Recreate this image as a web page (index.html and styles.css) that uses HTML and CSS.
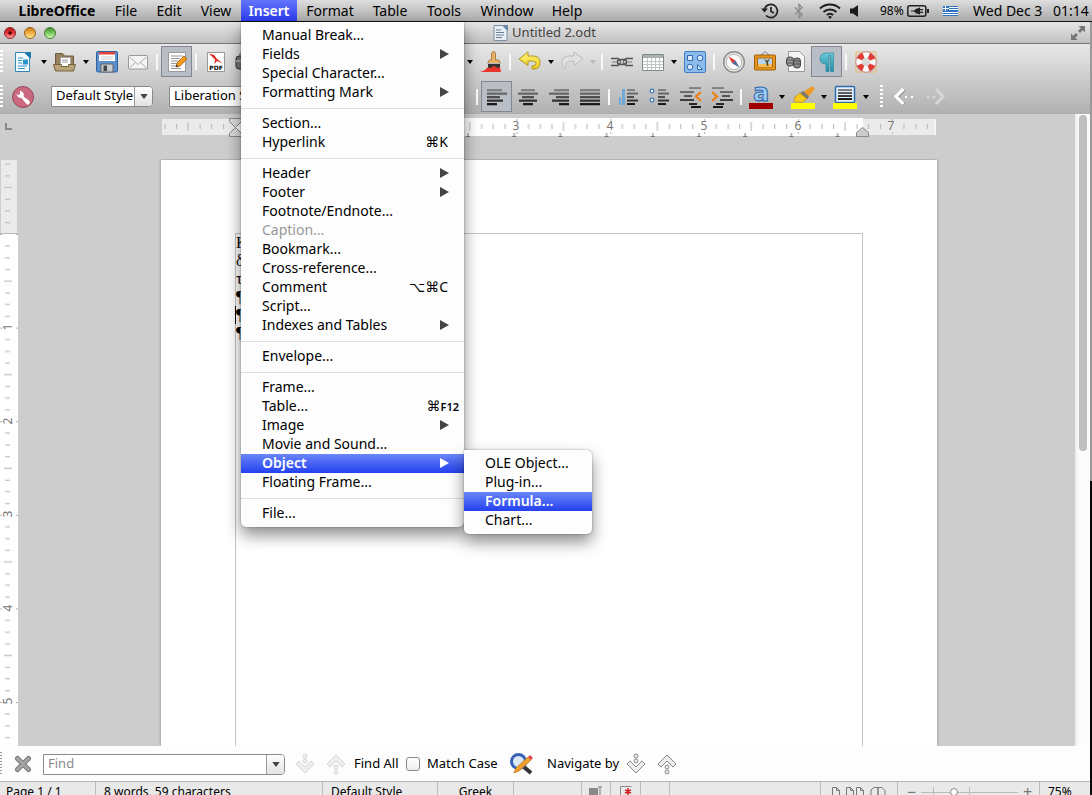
FILE: index.html
```html
<!DOCTYPE html>
<html lang="en">
<head>
<meta charset="utf-8">
<title>Untitled 2.odt</title>
<link rel="stylesheet" href="styles.css">
</head>
<body>
<svg class="defs" width="0" height="0" aria-hidden="true">
  <defs>
    <linearGradient id="gRed" x2="0" y2="1"><stop offset="0" stop-color="#a81818"/><stop offset=".5" stop-color="#e8383c"/><stop offset="1" stop-color="#ffb0b0"/></linearGradient>
    <linearGradient id="gAmber" x2="0" y2="1"><stop offset="0" stop-color="#c87818"/><stop offset=".5" stop-color="#f4b040"/><stop offset="1" stop-color="#fff0a0"/></linearGradient>
    <linearGradient id="gGreen" x2="0" y2="1"><stop offset="0" stop-color="#3c8c2c"/><stop offset=".5" stop-color="#7cc860"/><stop offset="1" stop-color="#d8ffb8"/></linearGradient>
    <linearGradient id="gGold" x2="0" y2="1"><stop offset="0" stop-color="#fff67a"/><stop offset="1" stop-color="#ecc818"/></linearGradient>
    <linearGradient id="gTeal" x2="0" y2="1"><stop offset="0" stop-color="#6cc8d8"/><stop offset="1" stop-color="#1b8fa8"/></linearGradient>
    <linearGradient id="gBar" x2="0" y2="1"><stop offset="0" stop-color="#888"/><stop offset="1" stop-color="#111"/></linearGradient>
    <symbol id="caret" viewBox="0 0 6 4"><path d="M0 0h6L3 4z"/></symbol>
    <symbol id="arrow" viewBox="0 0 9 10"><path d="M0 0l9 5-9 5z" fill="currentColor"/></symbol>
    <symbol id="down2" viewBox="0 0 20 22"><g fill="#eee" stroke="currentColor"><circle cx="10" cy="3" r="2"/><circle cx="10" cy="8" r="2"/><path d="M1 11l3-3 6 6 6-6 3 3-9 9z"/></g></symbol>
    <symbol id="up2" viewBox="0 0 20 22"><g fill="#eee" stroke="currentColor"><path d="M1 11l9-9 9 9-3 3-6-6-6 6z"/><circle cx="10" cy="14" r="2"/><circle cx="10" cy="19" r="2"/></g></symbol>
  </defs>
</svg>

<nav class="menubar">
  <div class="menus">
    <button class="menu-title app">LibreOffice</button>
    <button class="menu-title">File</button>
    <button class="menu-title">Edit</button>
    <button class="menu-title">View</button>
    <div class="menu-holder">
      <button class="menu-title open">Insert</button>
      <div class="menu" role="menu">
        <button class="item">Manual Break...</button>
        <button class="item">Fields<svg class="more"><use href="#arrow"/></svg></button>
        <button class="item">Special Character...</button>
        <button class="item">Formatting Mark<svg class="more"><use href="#arrow"/></svg></button>
        <hr>
        <button class="item">Section...</button>
        <button class="item">Hyperlink<span class="keys"><i>⌘</i>K</span></button>
        <hr>
        <button class="item">Header<svg class="more"><use href="#arrow"/></svg></button>
        <button class="item">Footer<svg class="more"><use href="#arrow"/></svg></button>
        <button class="item">Footnote/Endnote...</button>
        <button class="item" disabled>Caption...</button>
        <button class="item">Bookmark...</button>
        <button class="item">Cross-reference...</button>
        <button class="item">Comment<span class="keys"><i>⌥⌘</i>C</span></button>
        <button class="item">Script...</button>
        <button class="item">Indexes and Tables<svg class="more"><use href="#arrow"/></svg></button>
        <hr>
        <button class="item">Envelope...</button>
        <hr>
        <button class="item">Frame...</button>
        <button class="item">Table...<span class="keys fn"><i>⌘</i><small>F12</small></span></button>
        <button class="item">Image<svg class="more"><use href="#arrow"/></svg></button>
        <button class="item">Movie and Sound...</button>
        <div class="item-holder">
          <button class="item active">Object<svg class="more"><use href="#arrow"/></svg></button>
          <div class="menu submenu" role="menu">
            <button class="item">OLE Object...</button>
            <button class="item">Plug-in...</button>
            <button class="item active">Formula...</button>
            <button class="item">Chart...</button>
          </div>
        </div>
        <button class="item">Floating Frame...</button>
        <hr>
        <button class="item">File...</button>
      </div>
    </div>
    <button class="menu-title">Format</button>
    <button class="menu-title">Table</button>
    <button class="menu-title">Tools</button>
    <button class="menu-title">Window</button>
    <button class="menu-title">Help</button>
  </div>
  <div class="extras">
    <svg width="18" height="16" viewBox="0 0 18 16" fill="none" stroke="#222" stroke-width="1.7"><path d="M3.5 6A6.6 6.6 0 1 1 5 12.500"/><path d="M10 4v4.500l3 1.500"/><path d="M0 5.500h7L3.500 9.500z" fill="#222" stroke="none"/></svg>
    <svg class="bt" width="10" height="16" viewBox="0 0 10 16" fill="none" stroke="#8a8a8a" stroke-width="1.300"><path d="M1 4.500l7 7L5 14.500v-13l3 3-7 7"/></svg>
    <svg class="wifi" width="22" height="16" viewBox="0 0 22 16" fill="none" stroke="#1c1c1c" stroke-width="2"><path d="M1 5.500a14.500 14.500 0 0 1 20 0M4.500 9a9.500 9.500 0 0 1 13 0M7.800 12a5 5 0 0 1 6.400 0"/><path d="M11 16l-2-2.200a3 3 0 0 1 4 0z" fill="#1c1c1c" stroke="none"/></svg>
    <svg class="vol" width="8" height="12" viewBox="0 0 8 12"><path d="M0 3.500h3L8 0v12L3 8.500H0z" fill="#1c1c1c"/></svg>
    <span class="percent">98%</span>
    <svg class="batt" width="22" height="12" viewBox="0 0 22 12"><rect x=".8" y=".8" width="18" height="10.400" rx="2" fill="none" stroke="#222" stroke-width="1.500"/><path d="M20 4h2v4h-2zM4 5.500h3Q9 3 12 3V2.500h1V4h3v1.200h-3v1.600h3V8h-3v1.500h-1V9Q9 9 7 6.500H4z" fill="#222"/></svg>
    <svg class="flag" width="15" height="10" viewBox="0 0 15 10" shape-rendering="crispEdges"><path fill="#2f74c4" d="M0 0h15v10H0z"/><path fill="#fff" d="M6 1h9v1H6zM6 3h9v1H6zM0 6h15v1H0zM0 8h15v1H0zM2 0h1v5H2zM0 2h6v1H0z"/></svg>
    <span class="date">Wed Dec 3</span>
    <span class="time">01:14</span>
  </div>
</nav>

<div class="desktop">
<main class="window">
  <header class="titlebar">
    <div class="lights">
      <svg width="12" height="12"><circle cx="6" cy="6" r="5.500" fill="url(#gRed)" stroke="#8c2a2a"/><circle cx="6" cy="6" r="1.800" fill="#500"/></svg>
      <svg width="12" height="12"><circle cx="6" cy="6" r="5.500" fill="url(#gAmber)" stroke="#966020"/></svg>
      <svg width="12" height="12"><circle cx="6" cy="6" r="5.500" fill="url(#gGreen)" stroke="#4a8038"/></svg>
    </div>
    <h1 class="title"><svg width="15" height="16" viewBox="0 0 15 16"><path d="M1 .5h8.500L14 5v10.500H1z" fill="#e6eef4" stroke="#7890a8"/><path d="M9.500 0H15v6z" fill="#6a88a8"/><path d="M3 5h5M3 7.500h8M3 10h8M3 12.500h6" stroke="#6d8094"/></svg>Untitled 2.odt</h1>
    <svg class="full" width="14" height="14" viewBox="0 0 14 14" fill="#777"><path d="M7.500 0H14v6.500L11.800 4.300 9 7 7 5l2.700-2.700zM0 7.500V14h6.500l-2.200-2.200L7 9 5 7 2.200 9.700z"/></svg>
  </header>

  <section class="toolbars">
    <div class="toolbar">
      <span class="grip"></span>
      <button class="tool" aria-label="New"><svg viewBox="0 0 24 24"><path d="M4.500 2.500h9l5 5v14h-14z" fill="#f4fbff" stroke="#3586b8"/><path d="M13 2h7v7z" fill="#1f78b0"/><path d="M7 8h5M7 10.500h4M7 13h4M7 16h9M7 18.500h7" stroke="#2f93c8"/><path d="M12 9.500h5v5h-5z" fill="#2c93cc"/></svg></button>
      <button class="drop" aria-label="New options"><svg><use href="#caret"/></svg></button>
      <button class="tool" aria-label="Open"><svg viewBox="0 0 24 24"><path d="M2.500 19V3.500h7l2 2.500h9v13z" fill="#98825e" stroke="#6e5c40"/><path d="M7.500 7.500h10v9h-10z" fill="#fff" stroke="#aaa"/><path d="M9 10h6M9 12h6" stroke="#999"/><path d="M.500 14.500h8v2h7v-2h7l-2 6.500h-18z" fill="#b8a278" stroke="#75623f"/></svg></button>
      <button class="drop" aria-label="Open options"><svg><use href="#caret"/></svg></button>
      <button class="tool" aria-label="Save"><svg viewBox="0 0 24 24"><rect x="1.500" y="1.500" width="21" height="20.500" rx="1.500" fill="#5b8fcf" stroke="#315f9c"/><path d="M4 2h16v9H4z" fill="#fff"/><path d="M4 2h16v2.500H4z" fill="#e2453b"/><path d="M6 7h12M6 9h12" stroke="#ccc"/><path d="M6 14h12v8H6z" fill="#c8ccd0" stroke="#666"/><path d="M8.500 15.500h3.500V21H8.500z" fill="#444"/></svg></button>
      <button class="tool" aria-label="E-mail"><svg viewBox="0 0 24 24"><rect x="2.500" y="5.500" width="19" height="13.500" rx="1" fill="#f5f5f5" stroke="#999"/><path d="M3.500 7l8.500 7.500L20.500 7M3.500 18l6-5.500M20.500 18l-6-5.500" fill="none" stroke="#aaa"/></svg></button>
      <span class="sep"></span>
      <button class="tool pressed" aria-label="Edit File"><svg viewBox="0 0 24 24"><path d="M3.500 2.500h17v19h-17z" fill="#fbfbfb" stroke="#999"/><path d="M6 6h12M6 8.500h9M6 11h7M6 13.500h6M6 16h5M6 18.500h10" stroke="#999"/><path d="M11 17l1-4 7-7 3 3-7 7z" fill="#f49b1c" stroke="#a8620c" stroke-width=".8"/><path d="M11 17l.6-2.400L13.300 16.300z" fill="#222"/></svg></button>
      <span class="sep"></span>
      <button class="tool" aria-label="Export as PDF"><svg viewBox="0 0 24 24"><path d="M3.500 2.500h17v19h-17z" fill="#fff" stroke="#999"/><path d="M5 3.500l5 1.500 3 4 6 4.500-6-2.500-2.500 3 .500-4.500z" fill="#e2231a"/><text x="12" y="20" text-anchor="middle" class="pdf">PDF</text></svg></button>
      <button class="tool" aria-label="Print"><svg viewBox="0 0 24 24"><path d="M5 3h15v8H5z" fill="#f4f4f4" stroke="#777"/><rect x="1" y="6" width="22" height="13" rx="3" fill="#777" stroke="#333"/><path d="M1 11h22" stroke="#ddd"/></svg></button>
      <span class="covered"></span>
      <button class="drop" aria-label="Paste options"><svg><use href="#caret"/></svg></button>
      <button class="tool" aria-label="Clone Formatting"><svg viewBox="0 0 24 24"><path d="M12.500 10V4q0-2.500 2-2.500t2 2.500v6h3q1.500 0 1.500 4H9q0-4 1.500-4z" fill="#ecb268" stroke="#9a6a2c" stroke-width=".8"/><path d="M9 14h12v4H9z" fill="#333"/><path d="M9 13.500h12" stroke="#bbb"/><path d="M9 17q2 2 4 0t4 0 4 0l1 5H1q5-1 8-5z" fill="#e8342a"/></svg></button>
      <span class="sep"></span>
      <button class="tool" aria-label="Undo"><svg viewBox="0 0 24 24"><path d="M1 9l9-7v4h5q7 0 7 6.500T16 19h-2v-3q4 0 4-2.500t-4-2.500h-4v4.500z" fill="url(#gGold)" stroke="#b39420"/></svg></button>
      <button class="drop" aria-label="Undo options"><svg><use href="#caret"/></svg></button>
      <button class="tool" aria-label="Redo" disabled><svg viewBox="0 0 24 24"><path d="M23 9l-9-7v4H9q-7 0-7 6.500 0 4 3 6.500.500-8 5-8h4v4.500z" fill="#e0e0e0" stroke="#bcbcbc"/></svg></button>
      <button class="drop faded" aria-label="Redo options" disabled><svg><use href="#caret"/></svg></button>
      <span class="sep"></span>
      <button class="tool" aria-label="Hyperlink"><svg viewBox="0 0 24 24" fill="none" stroke="#555" stroke-width="1.500"><path d="M1 8.500h7l3 3M1 15.500h7l3-3M23 8.500h-7l-3 3M23 15.500h-7l-3-3"/><path d="M2 12h6M16 12h6" stroke="#999"/><rect x="7.500" y="9.500" width="9" height="5" rx="2.500"/></svg></button>
      <button class="tool" aria-label="Table"><svg viewBox="0 0 24 24"><path d="M1.500 4.500h21v16h-21z" fill="#fff" stroke="#808a84"/><path d="M2 5h20v3H2z" fill="#a9b3ac"/><path d="M2 11.500h20M2 14.500h20M2 17.500h20M6.500 8v12M10.500 8v12M14.500 8v12M18.500 8v12" stroke="#c0c6c2"/></svg></button>
      <button class="drop" aria-label="Table options"><svg><use href="#caret"/></svg></button>
      <button class="tool" aria-label="Gallery"><svg viewBox="0 0 24 24"><rect x="1.500" y="1.500" width="21" height="21" rx="1.500" fill="#8dbcec" stroke="#3d7fc4"/><g fill="#d8eafc" stroke="#2f6cb0"><path d="M4.500 5.500h5v5h-5zM14.500 14.500v5h5z"/><circle cx="17" cy="8" r="2.800"/><circle cx="7" cy="17" r="2.800"/></g></svg></button>
      <span class="sep"></span>
      <button class="tool" aria-label="Navigator"><svg viewBox="0 0 24 24"><circle cx="12" cy="12" r="10.300" fill="#ececec" stroke="#8e8e8e" stroke-width="1.500"/><circle cx="12" cy="12" r="7.800" fill="#fafafa" stroke="#b0b0b0"/><path d="M6.500 6.500L13.500 10.500 10.500 13.500z" fill="#d83830"/><path d="M17.500 17.500L13.500 10.500 10.500 13.500z" fill="#4a6898"/></svg></button>
      <button class="tool" aria-label="Image"><svg viewBox="0 0 24 24"><path d="M8 5l4-3.500L16 5" fill="none" stroke="#7d8794"/><rect x="1.500" y="5" width="21" height="15" rx="1" fill="#e8971c" stroke="#9c5e0c"/><path d="M4.500 8h15v9h-15z" fill="#b8d4ec" stroke="#a66a14"/><path d="M5 14h14v3H5z" fill="#f6bd58"/><path d="M14 16l-1-4-2-3 3 1.500 3-2-2 4 .500 3.500z" fill="#5a5030"/></svg></button>
      <button class="tool" aria-label="Find and Replace"><svg viewBox="0 0 24 24"><path d="M4.500 1.500h11l5 5v15h-16z" fill="#f6f6f6" stroke="#999"/><rect x="2.500" y="7" width="7" height="9" rx="3" fill="#999" stroke="#444"/><rect x="9.500" y="8" width="7" height="10" rx="3" fill="#888" stroke="#444"/><path d="M3 10h6M3 13h6M10 11h6M10 14h6" stroke="#555"/></svg></button>
      <button class="tool pressed" aria-label="Formatting Marks"><svg viewBox="0 0 24 24"><path d="M5 9q0-6 7-6h6.500v18.500h-3V5.500h-1.500v16h-3V14Q5 14 5 9z" fill="url(#gTeal)" stroke="#2c8aa0" stroke-width=".7"/></svg></button>
      <span class="sep"></span>
      <button class="tool" aria-label="Help"><svg viewBox="0 0 24 24"><path d="M2 2h20v20H2z" fill="none" stroke="#e8b870"/><circle cx="12" cy="12" r="7.200" fill="none" stroke="#fafafa" stroke-width="6"/><circle cx="12" cy="12" r="7.200" fill="none" stroke="#e03c34" stroke-width="6" stroke-dasharray="5.650 5.660" stroke-dashoffset="-2.800"/><circle cx="12" cy="12" r="10.300" fill="none" stroke="#c88"/></svg></button>
    </div>

    <div class="toolbar">
      <span class="grip"></span>
      <button class="tool" aria-label="Styles"><svg viewBox="0 0 24 24"><circle cx="12" cy="12" r="10.500" fill="#c9687e" stroke="#94485a"/><path d="M5.500 8.500q.500 4.500 5 4.500l5 6q2 1.500 3-.500t-.500-3l-5.500-4q1.500-4-3.500-6v4L7 10z" fill="#fff"/></svg></button>
      <span class="combo style"><select aria-label="Paragraph style"><option>Default Style</option></select><span class="combo-arrow"><svg width="8" height="5" viewBox="0 0 6 4"><use href="#caret"/></svg></span></span>
      <span class="combo font"><select aria-label="Font name"><option>Liberation Serif</option></select></span>
      <span class="sep"></span>
      <button class="tool pressed" aria-label="Align Left"><svg viewBox="0 0 24 24" fill="url(#gBar)"><path d="M2 4h15v2.200H2zM2 7.500h20v2.200H2zM2 11h13v2.200H2zM2 14.500h16v2.200H2zM2 18h10v2.200H2z"/></svg></button>
      <button class="tool" aria-label="Center"><svg viewBox="0 0 24 24" fill="url(#gBar)"><path d="M5 4h14v2.200H5zM2 7.500h20v2.200H2zM6 11h12v2.200H6zM3 14.500h18v2.200H3zM7 18h10v2.200H7z"/></svg></button>
      <button class="tool" aria-label="Align Right"><svg viewBox="0 0 24 24" fill="url(#gBar)"><path d="M7 4h15v2.200H7zM2 7.500h20v2.200H2zM9 11h13v2.200H9zM5 14.500h17v2.200H5zM12 18h10v2.200H12z"/></svg></button>
      <button class="tool" aria-label="Justify"><svg viewBox="0 0 24 24" fill="url(#gBar)"><path d="M2 4h20v2.200H2zM2 7.500h20v2.200H2zM2 11h20v2.200H2zM2 14.500h20v2.200H2zM2 18h20v2.200H2z"/></svg></button>
      <span class="sep"></span>
      <button class="tool" aria-label="Numbering"><svg viewBox="0 0 24 24"><path d="M5 4h3v16H5zM2 12h2v8H2z" fill="#6fa8d8"/><path d="M10 4h8v2h-8zM10 7.500h11v2H10zM10 11h7v2h-7zM10 14.500h11v2H10zM10 18h8v2h-8z" fill="url(#gBar)"/></svg></button>
      <button class="tool" aria-label="Bullets"><svg viewBox="0 0 24 24"><g fill="#fff" stroke="#3a78b8" stroke-width="1.200"><circle cx="4" cy="6" r="1.800"/><circle cx="4" cy="15" r="1.800"/></g><path d="M10 4h8v2h-8zM10 7.500h11v2H10zM10 11h7v2h-7zM10 14.500h11v2H10zM10 18h8v2h-8z" fill="url(#gBar)"/></svg></button>
      <button class="tool" aria-label="Decrease Indent"><svg viewBox="0 0 24 24"><path d="M10 2h12v2H10zM1 6h14v2H1zM5 10h8v2H5zM1 14h14v2H1zM10 18h8v2h-8zM12 21h10v2H12z" fill="url(#gBar)"/><path d="M22 7l-5 4.500 5 4.500" fill="none" stroke="#ef7d14" stroke-width="2.200"/></svg></button>
      <button class="tool" aria-label="Increase Indent"><svg viewBox="0 0 24 24"><path d="M2 2h12v2H2zM10 6h13v2H10zM12 10h8v2h-8zM10 14h13v2H10zM6 18h8v2H6zM3 21h10v2H3z" fill="url(#gBar)"/><path d="M2 7l5 4.500L2 16" fill="none" stroke="#ef7d14" stroke-width="2.200"/></svg></button>
      <span class="sep"></span>
      <button class="tool" aria-label="Font Color"><svg viewBox="0 0 24 24"><text x="12" y="16" text-anchor="middle" class="glyph-a">a</text><path d="M0 18h24v6H0z" fill="#a00000"/></svg></button>
      <button class="drop" aria-label="Font color options"><svg><use href="#caret"/></svg></button>
      <button class="tool" aria-label="Highlighting"><svg viewBox="0 0 24 24"><path d="M12 7l9-5.500q3 0 2.500 3L17 12z" fill="#ee9c26"/><path d="M9 8l3-2 6 5.500-2 3z" fill="#777"/><path d="M3 17l1-5 5-4 7 6-5 3.500z" fill="#f5c81c" stroke="#c49210" stroke-width=".7"/><path d="M0 18h24v6H0z" fill="#ff0"/></svg></button>
      <button class="drop" aria-label="Highlighting options"><svg><use href="#caret"/></svg></button>
      <button class="tool" aria-label="Paragraph Background"><svg viewBox="0 0 24 24"><rect x="2.500" y="1.500" width="19" height="16" rx="1" fill="#e4f0fb" stroke="#2f6cae" stroke-width="1.500"/><path d="M5 4h14v2H5zM5 7h14v2H5zM5 10h14v2H5zM5 13h14v2H5z" fill="url(#gBar)"/><path d="M0 18h24v6H0z" fill="#ff0"/></svg></button>
      <button class="drop" aria-label="Background options"><svg><use href="#caret"/></svg></button>
      <span class="grip second"></span>
      <button class="tool" aria-label="Previous"><svg viewBox="0 0 24 24"><path d="M12 4.500L5 12l7 7.500" fill="none" stroke="#888" stroke-width="4"/><path d="M11.500 4L4 11.500l7.500 7.500" fill="none" stroke="#fff" stroke-width="3.200"/><g fill="#fff" stroke="#999" stroke-width=".5"><circle cx="14" cy="12" r="1.800"/><circle cx="20" cy="12" r="1.800"/></g></svg></button>
      <button class="tool" aria-label="Next" disabled><svg viewBox="0 0 24 24"><path d="M13 4l7 7.500-7 7.500" fill="none" stroke="#d6d6d6" stroke-width="3"/><g fill="#d6d6d6"><circle cx="11" cy="12" r="1.600"/><circle cx="5" cy="12" r="1.600"/></g></svg></button>
    </div>
  </section>

  <section class="workspace">
    <div class="corner"><svg width="7" height="7"><path d="M0 0h2v5h5v2H0z" fill="#888"/></svg></div>
    <div class="h-ruler">
      <svg width="774" height="20">
        <defs>
          <pattern id="ticks" x="73" y="0" width="93.840" height="20" patternUnits="userSpaceOnUse"><path d="M12 6v5M24 6v5M35.500 6v5M59 6v5M70.500 6v5M82.500 6v5M47 4v9M.500 1v2M.500 14v2" stroke="#b4b4b4"/></pattern>
          <pattern id="tabs" x="73" y="15" width="46.200" height="4" patternUnits="userSpaceOnUse"><path d="M0 3.500h4M2 0v3" stroke="#777"/></pattern>
        </defs>
        <path d="M0 1h774v16H0z" fill="#ebebeb"/><path d="M73 0h628v18H73z" fill="#fff"/>
        <path d="M0 1h774v16H0z" fill="url(#ticks)"/><path d="M73 15h628v4H73z" fill="url(#tabs)"/>
        <path d="M773 1v16" stroke="#fff"/>
        <g class="ruler-num" text-anchor="middle"><text x="354" y="12">3</text><text x="448" y="12">4</text><text x="542" y="12">5</text><text x="636" y="12">6</text><text x="729" y="12">7</text></g>
        <path d="M67.500 .500h12v3l-6 6 6 6v3h-12v-3l6-6-6-6z" fill="#ddd" stroke="#888"/>
        <path d="M694.500 18.500v-4l6-5 6 5v4z" fill="#ccc" stroke="#888"/>
      </svg>
    </div>
    <div class="v-ruler">
      <svg width="18" height="586">
        <defs><pattern id="vticks" x="0" y="74" width="18" height="93.600" patternUnits="userSpaceOnUse"><path d="M5 12h5M5 24h5M5 35.500h5M5 59h5M5 70.500h5M5 82.500h5M4 47h8M0 .500h2M16 .500h2" stroke="#b4b4b4"/></pattern></defs>
        <path d="M1 0h16v73H1z" fill="#ebebeb"/><path d="M0 74h18v512H0z" fill="#fff"/><path d="M0 73.500h18" stroke="#bbb"/>
        <path d="M0 0h18v586H0z" fill="url(#vticks)"/>
        <g class="ruler-num" text-anchor="middle"><text transform="translate(12 167) rotate(-90)">1</text><text transform="translate(12 261) rotate(-90)">2</text><text transform="translate(12 354) rotate(-90)">3</text><text transform="translate(12 448) rotate(-90)">4</text><text transform="translate(12 541) rotate(-90)">5</text></g>
      </svg>
    </div>
    <div class="canvas">
      <article class="page">
        <div class="text-frame" lang="el">
          <p>Κ</p><p>δ</p><p>τ</p><p>¶</p><p class="cursor">¶</p><p>¶</p>
        </div>
      </article>
    </div>
    <div class="scrollbar"><div class="thumb"></div></div>
  </section>

  <form class="findbar">
    <span class="grip"></span>
    <button type="button" class="plain close" aria-label="Close"><svg width="18" height="18" viewBox="0 0 18 18"><path d="M3.500 3.500l11 11M14.500 3.500l-11 11" stroke="#777" stroke-width="5" stroke-linecap="round"/><path d="M3.500 3.500l11 11M14.500 3.500l-11 11" stroke="#a4a4a4" stroke-width="3" stroke-linecap="round"/></svg></button>
    <span class="combo find"><input type="text" placeholder="Find" aria-label="Find"><span class="combo-arrow"><svg width="8" height="5" viewBox="0 0 6 4"><use href="#caret"/></svg></span></span>
    <button type="button" class="plain nav dim" aria-label="Find Next"><svg width="20" height="22"><use href="#down2"/></svg></button>
    <button type="button" class="plain nav dim" aria-label="Find Previous"><svg width="20" height="22"><use href="#up2"/></svg></button>
    <button type="button" class="plain all">Find All</button>
    <label class="match"><input type="checkbox">Match Case</label>
    <button type="button" class="plain replace" aria-label="Find and Replace"><svg width="24" height="22" viewBox="0 0 24 22"><path d="M15 14l7 6" stroke="#333" stroke-width="4"/><circle cx="9.500" cy="8.500" r="7" fill="#dce9f8" stroke="#3a62b4" stroke-width="3"/><path d="M5 20l2-5L19 4l3 3L10 18z" fill="#f5a02a" stroke="#b06a14" stroke-width=".7"/><path d="M19 4l2-2 3 3-2 2z" fill="#e04848"/></svg></button>
    <span class="nav-label">Navigate by</span>
    <button type="button" class="plain nav lit" aria-label="Next"><svg width="20" height="22"><use href="#down2"/></svg></button>
    <button type="button" class="plain nav lit" aria-label="Previous"><svg width="20" height="22"><use href="#up2"/></svg></button>
  </form>

  <footer class="statusbar">
    <span>Page 1 / 1</span>
    <span>8 words, 59 characters</span>
    <span>Default Style</span>
    <span class="mid">Greek</span>
    <span></span>
    <span class="mid"><svg width="14" height="12"><path d="M0 2h9v8H0z" fill="#888"/><path d="M9 1h4M11 1v10" stroke="#777"/></svg></span>
    <span class="mid"><svg width="14" height="14"><path d="M1.500 14V1.500h11" fill="none" stroke="#888"/><path d="M9 3v7M6 4.800l6 3.400M12 4.800L6 8.200" stroke="#d01818" stroke-width="1.500"/></svg></span>
    <span></span>
    <span></span>
    <span class="mid"><svg width="56" height="14" fill="none" stroke="#777"><path d="M1.500 14V2.500h4l3 3V14M5.500 2.500v3h3M15.500 14V2.500h4l3 3V14M19.500 2.500v3h3M25.500 14V2.500h4l3 3V14M29.500 2.500v3h3M40 14V5l3-2.500h4V14M47 14V2.500h4l3 3V14"/></svg></span>
    <span class="zoom"><button type="button" aria-label="Zoom out">−</button><input type="range" min="0" max="100" value="33" aria-label="Zoom"><button type="button" aria-label="Zoom in">+</button></span>
    <span>75%</span>
  </footer>
</main>
<div class="behind"></div>
</div>
</body>
</html>
```

FILE: styles.css
```css
* { box-sizing: border-box; }
body {
  margin: 0;
  height: 100vh;
  overflow: hidden;
  display: flex;
  flex-direction: column;
  font: 14px/19px "Noto Sans", "Open Sans", sans-serif;
  color: #000;
}
button, input, select { font: inherit; color: inherit; margin: 0; padding: 0; border: 0; background: none; }
svg { display: block; flex: none; }
.defs { position: absolute; }

/* Menu bar */
.menubar {
  display: flex;
  justify-content: space-between;
  height: 22px;
  flex: none;
  border-bottom: 1px solid #111;
  background: linear-gradient(#dedede, #a9a9a9);
  position: relative;
  z-index: 2;
}
.menus { display: grid; grid-template-columns: 96px 42px 44px 50px 56px 66px 54px 54px 72px 48px; padding-left: 9px; }
.menu-title { height: 21px; line-height: 21px; text-align: center; white-space: nowrap; }
.menu-title.app { font-weight: 700; }
.menu-title.open { width: 100%; font-weight: 600; color: #fff; background: linear-gradient(#6474fa, #2a3cf0); }
.menu-holder, .item-holder { position: relative; }
.menu {
  position: absolute;
  top: 22px;
  left: 0;
  width: 223px;
  padding: 4px 0;
  background: #fdfdfd;
  border-radius: 0 0 5px 5px;
  box-shadow: 0 8px 16px rgba(0,0,0,.45), 0 0 2px rgba(0,0,0,.4);
}
.submenu { top: -4px; left: 100%; width: 128px; border-radius: 0 5px 5px 5px; }
.item {
  display: flex;
  align-items: center;
  width: 100%;
  height: 19px;
  padding: 0 16px 2px 21px;
  white-space: nowrap;
}
.item.active { color: #fff; font-weight: 600; background: linear-gradient(#6a86f8, #2440f0); }
.item:disabled { color: #999; }
.menu hr { height: 1px; margin: 6px 0 5px; border: 0; background: #ddd; }
.more { width: 9px; height: 10px; margin-left: auto; margin-right: -1px; color: #444; }
.active .more { color: #fff; }
.keys { margin-left: auto; }
.keys i { font: 14px "DejaVu Sans", sans-serif; }
.keys.fn { margin-right: -11px; }
.keys small { font-size: 11px; font-weight: 600; }

.extras { display: flex; align-items: center; width: 331px; white-space: nowrap; flex: none; }
.bt { margin-left: 15px; }
.wifi { margin-left: 15px; }
.vol { margin-left: 9px; }
.percent { width: 27px; margin-left: 22px; font-size: 12px; }
.flag { margin-left: 14px; }
.date { margin-left: 15px; width: 80px; }

/* Window */
.desktop { flex: 1; min-height: 0; display: flex; }
.window { flex: 1; min-width: 0; display: flex; flex-direction: column; background: #fff; }
.behind { width: 2px; background: linear-gradient(#9a9a9a 0 459px, #0a0a0a 459px); }
.titlebar {
  display: grid;
  grid-template-columns: 1fr auto 1fr;
  align-items: center;
  height: 22px;
  flex: none;
  padding: 0 5px 0 4px;
  border-bottom: 1px solid #777;
  background: linear-gradient(#e6e6e6, #c0c0c0);
}
.lights { display: flex; gap: 8px; }
.full { justify-self: end; }
.title { display: flex; align-items: center; gap: 4px; margin: 0; font-size: 13px; font-weight: 400; color: #444; }
.toolbars { flex: none; background: linear-gradient(#e8e8e8, #b0b0b0); }
.toolbar { display: flex; align-items: center; height: 35px; overflow: hidden; }
.grip { width: 3px; height: 24px; margin-right: 4px; flex: none; background: repeating-linear-gradient(#fff 0 2px, transparent 2px 4px); }
.grip.second { margin: 0 5px 0 9px; }
.tool { width: 31px; height: 31px; flex: none; display: grid; place-items: center; }
.tool svg { width: 24px; height: 24px; }
.pressed { background: #b9bdc6; border: 1px solid #83878f; }
.drop { width: 11px; height: 30px; flex: none; display: grid; place-items: center; }
.drop svg { width: 6px; height: 4px; }
.faded { opacity: .15; }
.sep { width: 2px; height: 16px; margin: 0 3px; flex: none; background: #f8f8f8; }
.covered { width: 202px; flex: none; }
.pdf { font: 700 6px "DejaVu Sans", sans-serif; }
.glyph-a { font: 700 24px "DejaVu Sans", sans-serif; fill: #9fcbf2; stroke: #2863a8; }
.combo { display: flex; height: 21px; flex: none; border: 1px solid #8a8a8a; border-radius: 0 4px 4px 0; background: #fff; position: relative; }
.combo select { appearance: none; width: 100%; padding: 0 0 2px 4px; font-size: 13px; line-height: 17px; }
.combo-arrow { position: absolute; right: 0; top: 0; bottom: 0; width: 18px; display: grid; place-items: center; border-left: 1px solid #999; border-radius: 0 3px 3px 0; background: linear-gradient(#fff, #e2e2e2); pointer-events: none; fill: #444; }
.combo.style { width: 102px; margin-left: 13px; }
.combo.font { width: 160px; margin-left: 16px; margin-right: 144px; }

/* Workspace */
.workspace {
  flex: 1;
  min-height: 0;
  display: grid;
  grid-template-columns: 18px 1fr 15px;
  grid-template-rows: 45px 1fr;
  background: #cdcdcd;
  overflow: hidden;
}
.corner { padding: 9px 0 0 5px; }
.h-ruler { display: flex; justify-content: center; padding: 4px 0 0 4px; }
.v-ruler { grid-area: 2 / 1; padding-top: 1px; overflow: hidden; }
.ruler-num { font-size: 12px; fill: #777; }
.canvas { grid-area: 2 / 2; display: flex; justify-content: center; padding: 1px 0 0 5px; overflow: hidden; }
.page { width: 776px; padding: 73px 74px 0; background: #fff; box-shadow: 0 0 3px #888; display: flex; }
.text-frame { flex: 1; border: 1px solid #c4c4c4; border-bottom: 0; font: 16px/18px "Liberation Serif", serif; }
.text-frame p { margin: 0; }
.text-frame .cursor { margin-left: -1px; border-left: 1px solid #000; }
.scrollbar { grid-area: 1 / 3 / 3 / 4; padding: 1px 3px 0 4px; background: linear-gradient(90deg, #ececec, #fcfcfc 30%); }
.thumb { height: 336px; border-radius: 4px; background: #bfbfbf; }

/* Find bar */
.findbar { flex: none; height: 35px; display: flex; align-items: center; background: #fdfdfd; font-size: 13px; }
.findbar .grip { background: repeating-linear-gradient(#999 0 1px, transparent 1px 3px); width: 2px; margin-right: 12px; }
.plain { display: flex; align-items: center; white-space: nowrap; }
.combo.find { width: 242px; margin: 1px 4px 0 11px; }
.combo.find input { width: 100%; padding: 0 0 2px 4px; outline: 0; }
.find input::placeholder { color: #888; opacity: 1; }
.nav { width: 31px; justify-content: center; }
.dim { color: #d6d6d6; }
.lit { color: #888; }
.all { width: 52px; margin-left: 3px; }
.match { display: flex; align-items: center; gap: 7px; width: 103px; white-space: nowrap; }
.match input { appearance: none; width: 14px; height: 14px; border: 1px solid #888; border-radius: 3px; background: linear-gradient(#fff, #eee); }
.nav-label { width: 73px; margin-left: 14px; white-space: nowrap; }

/* Status bar */
.statusbar {
  flex: none;
  height: 14px;
  overflow: hidden;
  display: grid;
  grid-template-columns: 96px 227px 115px 76px 68px 29px 30px 29px 1fr 77px 142px 50px;
  border-top: 1px solid #b4b4b4;
  background: #e9e9e9;
  font-size: 12px;
  line-height: 19px;
}
.statusbar > span { height: 19px; padding-left: 8px; border-right: 1px solid #bbb; white-space: nowrap; }
.statusbar > span:first-child { padding-left: 6px; }
.statusbar > span:last-child { border-right: 0; }
.statusbar > .mid { display: flex; justify-content: center; align-items: center; padding: 0; }
.statusbar > .zoom { display: flex; align-items: center; gap: 4px; }
.zoom button { width: 11px; font-size: 16px; line-height: 16px; color: #777; }
.zoom input {
  appearance: none;
  width: 97px;
  height: 10px;
  background:
    linear-gradient(#bbb, #bbb) 12px 0 / 1px 10px no-repeat,
    linear-gradient(#bbb, #bbb) 48px 0 / 1px 10px no-repeat,
    linear-gradient(#bbb, #bbb) 0 5px / 100% 1px no-repeat;
}
.zoom input::-webkit-slider-thumb { appearance: none; width: 8px; height: 8px; border: 1px solid #888; border-radius: 50%; background: #fff; }
```
